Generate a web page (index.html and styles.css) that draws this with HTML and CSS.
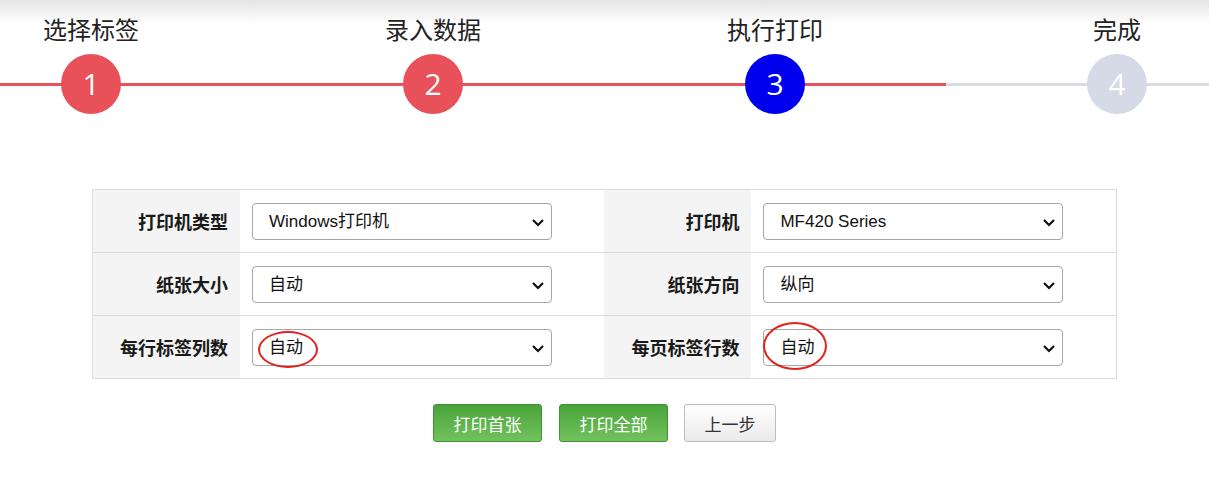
FILE: index.html
```html
<!DOCTYPE html>
<html lang="zh-CN">
<head>
    <meta charset="UTF-8">
    <meta name="viewport" content="width=device-width, initial-scale=1.0">
    <title>执行打印</title>
    <link rel="stylesheet" href="styles.css">
</head>
<body>
    <div class="steps">
        <div class="step done">
            <span class="label">选择标签</span>
            <span class="num">1</span>
        </div>
        <div class="step done">
            <span class="label">录入数据</span>
            <span class="num">2</span>
        </div>
        <div class="step current">
            <span class="label">执行打印</span>
            <span class="num">3</span>
        </div>
        <div class="step">
            <span class="label">完成</span>
            <span class="num">4</span>
        </div>
    </div>

    <table class="settings">
        <tr>
            <th>打印机类型</th>
            <td>
                <div class="pick">
                    <select><option>Windows打印机</option></select>
                    <svg class="chev" width="14" height="10" viewBox="0 0 14 10"><path d="M2 3l5 5 5-5" fill="none" stroke="#111" stroke-width="2.2"/></svg>
                </div>
            </td>
            <th>打印机</th>
            <td>
                <div class="pick">
                    <select><option>MF420 Series</option></select>
                    <svg class="chev" width="14" height="10" viewBox="0 0 14 10"><path d="M2 3l5 5 5-5" fill="none" stroke="#111" stroke-width="2.2"/></svg>
                </div>
            </td>
        </tr>
        <tr>
            <th>纸张大小</th>
            <td>
                <div class="pick">
                    <select><option>自动</option></select>
                    <svg class="chev" width="14" height="10" viewBox="0 0 14 10"><path d="M2 3l5 5 5-5" fill="none" stroke="#111" stroke-width="2.2"/></svg>
                </div>
            </td>
            <th>纸张方向</th>
            <td>
                <div class="pick">
                    <select><option>纵向</option></select>
                    <svg class="chev" width="14" height="10" viewBox="0 0 14 10"><path d="M2 3l5 5 5-5" fill="none" stroke="#111" stroke-width="2.2"/></svg>
                </div>
            </td>
        </tr>
        <tr>
            <th>每行标签列数</th>
            <td>
                <div class="pick">
                    <select><option>自动</option></select>
                    <svg class="chev" width="14" height="10" viewBox="0 0 14 10"><path d="M2 3l5 5 5-5" fill="none" stroke="#111" stroke-width="2.2"/></svg>
                    <span class="mark mark-a"></span>
                </div>
            </td>
            <th>每页标签行数</th>
            <td>
                <div class="pick">
                    <select><option>自动</option></select>
                    <svg class="chev" width="14" height="10" viewBox="0 0 14 10"><path d="M2 3l5 5 5-5" fill="none" stroke="#111" stroke-width="2.2"/></svg>
                    <span class="mark mark-b"></span>
                </div>
            </td>
        </tr>
    </table>

    <div class="actions">
        <button class="btn green">打印首张</button>
        <button class="btn green">打印全部</button>
        <button class="btn plain">上一步</button>
    </div>
</body>
</html>
```

FILE: styles.css
```css
body{
    margin: 0;
    font-family: "Noto Sans CJK SC", "Liberation Sans", sans-serif;
    color: #222;
    background: linear-gradient(#e4e4e4, #fff 24px) no-repeat;
    background-size: 100% 24px;
    background-color: #fff;
}
.steps{
    display: flex;
    justify-content: space-between;
    padding: 12px 62px 0 61px;
    background: linear-gradient(#e8535a, #e8535a) 0 83px / 946px 3px no-repeat,
                linear-gradient(#d9dce6, #d9dce6) 0 83px / 100% 3px no-repeat;
}
.step{
    width: 60px;
    display: flex;
    flex-direction: column;
    align-items: center;
}
.step .label{
    font-size: 24px;
    line-height: 34px;
    white-space: nowrap;
    color: #222;
}
.step .num{
    margin-top: 8px;
    width: 60px;
    height: 60px;
    border-radius: 50%;
    background: #d6d9e6;
    color: #fff;
    font-family: "Open Sans", sans-serif;
    font-size: 30px;
    line-height: 60px;
    text-align: center;
}
.step.done .num{
    background: #e8505a;
}
.step.current .num{
    background: #0000ee;
}

.settings{
    margin: 75px auto 0;
    width: 1025px;
    border-collapse: collapse;
    border: 1px solid #dcdcdc;
}
.settings tr{
    height: 63px;
    border-bottom: 1px solid #dcdcdc;
}
.settings th{
    width: 135px;
    background: #f4f4f4;
    text-align: right;
    padding: 0 12px 0 0;
    font-size: 18px;
    font-weight: bold;
    color: #1a1a1a;
    white-space: nowrap;
}
.settings td{
    padding: 0 0 0 12px;
    background: #fff;
}
.pick{
    position: relative;
    width: 300px;
}
.pick select{
    appearance: none;
    -webkit-appearance: none;
    width: 300px;
    height: 37px;
    border: 1px solid #a6a6a6;
    border-radius: 4px;
    background: #fff;
    padding: 0 30px 0 16px;
    font-family: "Liberation Sans", "Noto Sans CJK SC", sans-serif;
    font-size: 17px;
    color: #111;
}
.chev{
    position: absolute;
    right: 7px;
    top: 14px;
    pointer-events: none;
}
.mark{
    position: absolute;
    border: 2.5px solid #e0231c;
    border-radius: 50%;
    pointer-events: none;
}
.mark-a{
    left: 6px;
    top: 2px;
    width: 56px;
    height: 33px;
}
.mark-b{
    left: 0;
    top: -7px;
    width: 60px;
    height: 44px;
}

.actions{
    display: flex;
    justify-content: center;
    gap: 17px;
    margin-top: 25px;
}
.btn{
    height: 38px;
    padding: 0 18px;
    border-radius: 3px;
    font-family: "Noto Sans CJK SC", sans-serif;
    font-size: 17px;
}
.btn.green{
    width: 109px;
    color: #fff;
    border: 1px solid #3f9232;
    background: linear-gradient(#4aa33a, #72c25e);
}
.btn.plain{
    width: 92px;
    margin-left: -1px;
    color: #333;
    border: 1px solid #bdbdbd;
    background: linear-gradient(#fff, #eaeaea);
}
```
